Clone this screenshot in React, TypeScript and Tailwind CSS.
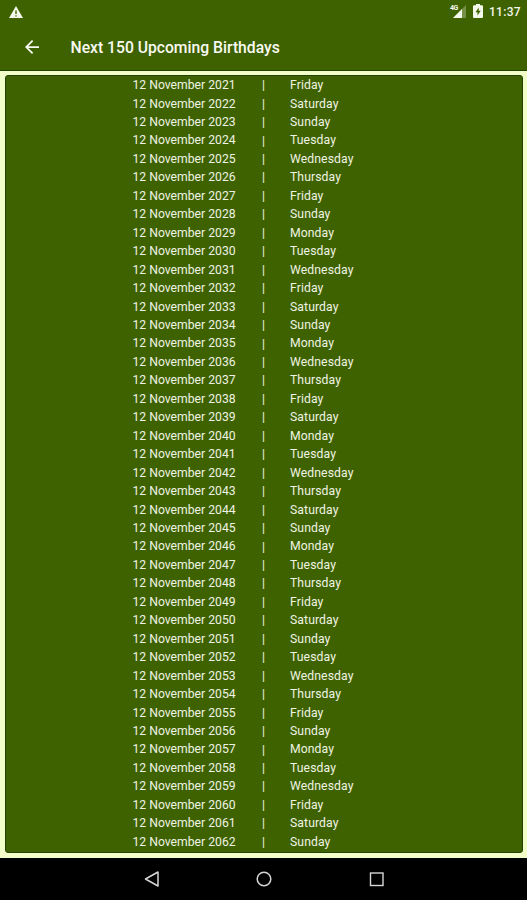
const FIRST_YEAR = 2021;
const VISIBLE_ROWS = 42;

const birthdays = Array.from({ length: VISIBLE_ROWS }, (_, i) => {
    const date = new Date(FIRST_YEAR + i, 10, 12);
    return {
        date: `12 November ${date.getFullYear()}`,
        day: date.toLocaleDateString('en-US', { weekday: 'long' }),
    };
});

function StatusBar() {
    return (
        <div className="flex h-6 shrink-0 items-center justify-between pl-[9px] pr-[6px] text-[#f4f8ec]">
            <svg className="h-[13px] w-[14px]" viewBox="0 0 14 13" fill="currentColor">
                <path fillRule="evenodd" d="M7 0 14 12H0ZM6.3 4.500v3.600h1.400V4.500Zm0 4.700v1.400h1.400V9.200Z" />
            </svg>
            <div className="flex items-center">
                {/* 4G signal */}
                <div className="relative h-[14px] w-[17px]">
                    <svg className="h-[14px] w-[17px]" viewBox="0 0 17 14" fill="currentColor">
                        <path d="M16 0v13H3Z" opacity=".3" />
                        <path d="M12 4v9H3Z" />
                    </svg>
                    <span className="absolute left-0 top-0 text-[7px] font-bold leading-[7px] tracking-[-0.5px]">4G</span>
                </div>
                <svg className="ml-[6px] h-[14px] w-[10px] -translate-y-px" viewBox="0 0 10 14" fill="currentColor">
                    <path fillRule="evenodd" d="M3 0h4v1.300h2q1 0 1 1V13q0 1-1 1H1q-1 0-1-1V2.300q0-1 1-1h2ZM5.700 3.500 2.500 8.200h2v3.300L7.700 6.800h-2Z" />
                </svg>
                <span className="ml-[6px] w-[32px] whitespace-nowrap text-[12px] font-medium leading-none tracking-[0.3px]">11:37</span>
            </div>
        </div>
    );
}

function AppBar() {
    return (
        <header className="flex h-[47px] shrink-0 items-center border-b border-[#234400] pl-[25px] text-[#f8faf3]">
            <svg className="h-[14px] w-[14px]" viewBox="4 4 16 16" fill="currentColor">
                <path d="M20 11H7.830l5.590-5.590L12 4l-8 8 8 8 1.410-1.410L7.830 13H20z" />
            </svg>
            <h1 className="ml-[31.5px] whitespace-nowrap pt-[2px] text-[15.7px] font-medium">Next 150 Upcoming Birthdays</h1>
        </header>
    );
}

function NavigationBar() {
    return (
        <nav className="flex h-[42px] shrink-0 items-center bg-black pl-[143px] text-[#d6d6d6]">
            <svg className="h-[18px] w-[16px]" viewBox="0 0 16 18" fill="none" stroke="currentColor" strokeWidth="1.5">
                <path d="M15 2v14L2.500 9Z" strokeLinejoin="round" />
            </svg>
            <svg className="ml-[97px] h-[16px] w-[16px]" viewBox="0 0 16 16" fill="none" stroke="currentColor" strokeWidth="1.5">
                <circle cx="8" cy="8" r="6.800" />
            </svg>
            <svg className="ml-[97px] h-[16px] w-[16px]" viewBox="0 0 16 16" fill="none" stroke="currentColor" strokeWidth="1.400">
                <rect x="1.500" y="2" width="12.500" height="12.500" />
            </svg>
        </nav>
    );
}

export default function App() {
    return (
        <div className="flex h-[900px] w-[527px] flex-col overflow-hidden bg-[#3f6200] font-['Roboto',sans-serif]">
            <StatusBar />
            <AppBar />
            <main className="flex min-h-0 flex-1 flex-col bg-[#f3ffc8] pb-[5px] pl-[5px] pr-[4px] pt-[4px]">
                <div className="flex-1 overflow-hidden rounded-[3px] border border-[#234400] bg-[#3f6200]">
                    {birthdays.map(({ date, day }) => (
                        <div key={date} className="flex h-[18.46px] items-center pl-[126.5px] text-[12.2px] leading-none text-[#eef3e4]">
                            <span className="w-[129.5px] whitespace-nowrap">{date}</span>
                            <span className="w-[28px] text-[12px]">|</span>
                            <span className="tracking-[0.1px]">{day}</span>
                        </div>
                    ))}
                </div>
            </main>
            <NavigationBar />
        </div>
    );
}
